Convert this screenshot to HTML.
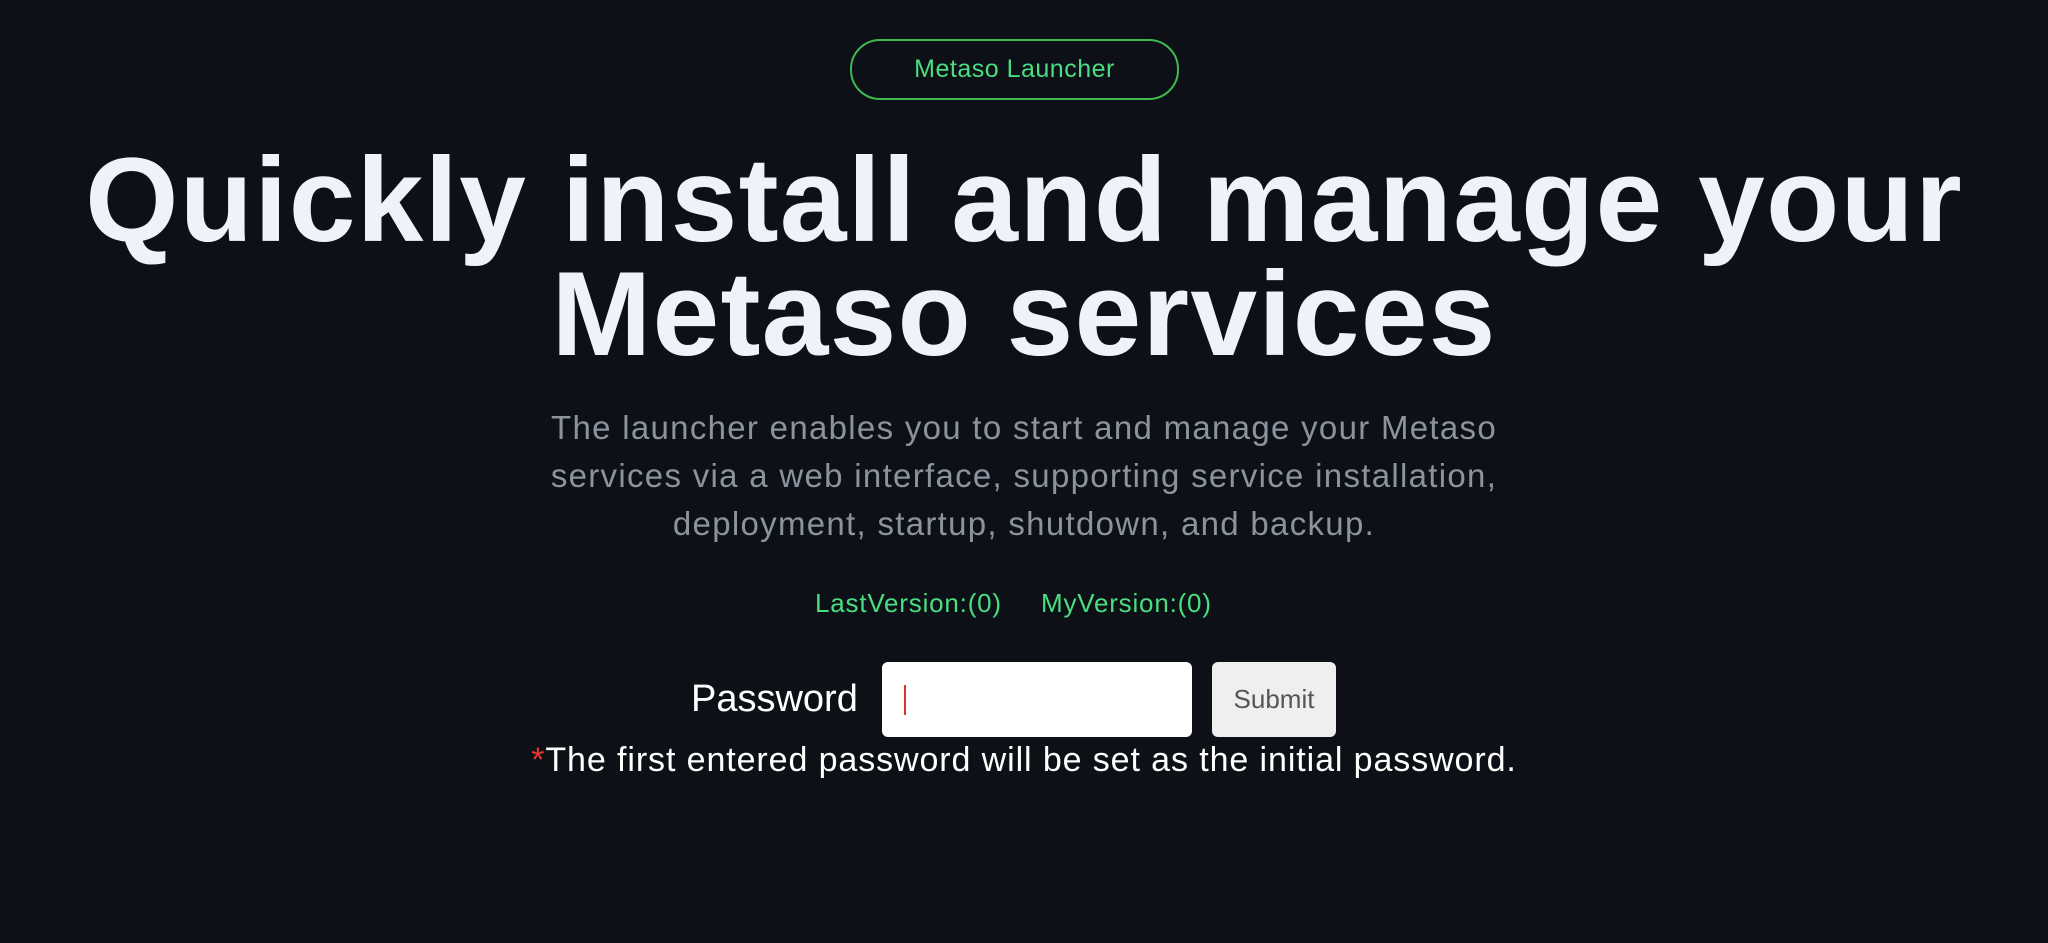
<!DOCTYPE html>
<html><head><meta charset="utf-8"><style>
html,body{margin:0;padding:0;width:2048px;height:943px;background:#0d1117;overflow:hidden;font-family:"Liberation Sans",sans-serif;}
.abs{position:absolute;}
.pill{left:850px;top:39px;width:325px;height:57px;border:2px solid #3fb950;border-radius:30px;color:#4ade80;font-size:25px;line-height:57px;text-align:center;letter-spacing:0.5px;}
.h{left:0;width:2048px;text-align:center;color:#eef3fb;font-weight:bold;font-size:120px;white-space:nowrap;letter-spacing:1.2px;}
.p{left:0;width:2048px;text-align:center;color:#8b949e;font-size:33px;line-height:48px;letter-spacing:1.3px;}
.v{color:#4ade80;font-size:26px;top:588px;letter-spacing:0.8px;}
</style></head><body>
<div class="abs pill">Metaso Launcher</div>
<div class="abs h" style="top:135px;line-height:130px;">Quickly install and manage your</div>
<div class="abs h" style="top:249px;line-height:130px;">Metaso services</div>
<div class="abs p" style="top:404px;">The launcher enables you to start and manage your Metaso<br>services via a web interface, supporting service installation,<br>deployment, startup, shutdown, and backup.</div>
<div class="abs v" style="left:815px;">LastVersion:(0)</div>
<div class="abs v" style="left:1041px;">MyVersion:(0)</div>
<div class="abs" style="left:691px;top:678px;color:#fff;font-size:38px;">Password</div>
<div class="abs" style="left:882px;top:662px;width:310px;height:75px;background:#fff;border-radius:6px;"><div class="abs" style="left:22px;top:23px;width:2px;height:30px;background:#d33;"></div></div>
<div class="abs" style="left:1212px;top:662px;width:124px;height:75px;background:#efefef;border-radius:6px;color:#555;font-size:26px;line-height:75px;text-align:center;">Submit</div>
<div class="abs" style="left:0;width:2048px;top:741px;text-align:center;color:#fff;font-size:34px;letter-spacing:0.9px;"><span style="color:#e53935">*</span>The first entered password will be set as the initial password.</div>
</body></html>
